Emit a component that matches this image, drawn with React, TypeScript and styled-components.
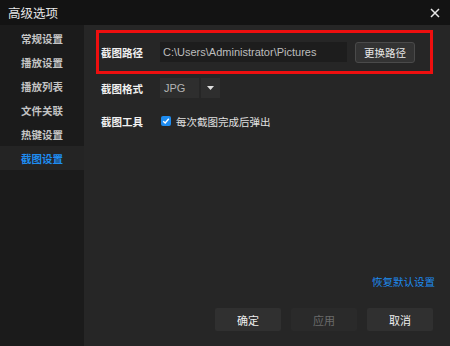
import styled, { createGlobalStyle } from "styled-components";

const Global = createGlobalStyle`
  html, body {
    margin: 0;
    padding: 0;
    background: #262626;
  }
  * {
    box-sizing: border-box;
  }
`;

const Window = styled.div`
  width: 450px;
  height: 346px;
  display: flex;
  flex-direction: column;
  background: #262626;
  font-family: "Liberation Sans", "Noto Sans CJK SC", sans-serif;
  font-size: 12px;
  color: #dcdcdc;
  overflow: hidden;
`;

const TitleBar = styled.div`
  height: 25px;
  flex: none;
  display: flex;
  align-items: center;
  justify-content: space-between;
  padding: 0 10px 0 8px;
  background: #131313;
  font-size: 12.5px;
  color: #e6e6e6;
`;

const Body = styled.div`
  flex: 1;
  display: flex;
`;

const Sidebar = styled.div`
  width: 84px;
  flex: none;
  background: #1b1b1b;
  padding-top: 1px;
  display: flex;
  flex-direction: column;
`;

const NavItem = styled.div<{ $active?: boolean }>`
  height: 24px;
  display: flex;
  align-items: center;
  justify-content: center;
  font-size: 10.5px;
  font-weight: 700;
  color: ${(p) => (p.$active ? "#1e8cf0" : "#c4c4c4")};
  background: ${(p) => (p.$active ? "#242424" : "transparent")};
`;

const Main = styled.div`
  flex: 1;
  display: flex;
  flex-direction: column;
  padding: 5px 14px 15px 12px;
`;

const Highlight = styled.div`
  border: 3px solid #ee0f0f;
  height: 44px;
  display: flex;
  align-items: center;
  padding-left: 2px;
  margin-right: 3px;
`;

const Row = styled.div<{ $h: number }>`
  height: ${(p) => p.$h}px;
  display: flex;
  align-items: center;
  padding-left: 5px;
`;

const Label = styled.div`
  width: 59px;
  flex: none;
  font-weight: 700;
  font-size: 10.5px;
  color: #f0f0f0;
`;

const PathBox = styled.div`
  width: 187px;
  height: 20px;
  background: #1d1d1d;
  display: flex;
  align-items: center;
  padding-left: 3px;
  font-size: 11px;
  color: #bdbdbd;
`;

const SmallButton = styled.div`
  margin-left: 8px;
  width: 60px;
  height: 21px;
  border: 1px solid #4a4a4a;
  border-radius: 3px;
  background: #333333;
  display: flex;
  align-items: center;
  justify-content: center;
  font-size: 10.5px;
  color: #e8e8e8;
`;

const Select = styled.div`
  display: flex;
  gap: 2px;
  height: 20px;
`;

const SelectValue = styled.div`
  width: 39px;
  background: #2e2e2e;
  display: flex;
  align-items: center;
  padding-left: 4px;
  font-size: 11px;
  color: #b4b4b4;
`;

const SelectArrow = styled.div`
  width: 19px;
  background: #2e2e2e;
  display: flex;
  align-items: center;
  justify-content: center;
`;

const Check = styled.div`
  width: 10px;
  height: 10px;
  border-radius: 2px;
  background: #1e8cf0;
  display: flex;
  align-items: center;
  justify-content: center;
  margin: 0 5px 0 1px;
`;

const CheckText = styled.div`
  font-size: 10.5px;
  color: #e0e0e0;
`;

const Spacer = styled.div`
  flex: 1;
`;

const ResetLink = styled.div`
  align-self: flex-end;
  font-size: 10.5px;
  color: #1e8cf0;
  margin-right: 1px;
`;

const Footer = styled.div`
  margin-top: 19px;
  margin-right: 3px;
  display: flex;
  justify-content: flex-end;
  gap: 10px;
`;

const FooterButton = styled.div<{ $disabled?: boolean }>`
  width: 66px;
  height: 23px;
  border-radius: 2px;
  background: ${(p) => (p.$disabled ? "#2a2a2a" : "#303030")};
  display: flex;
  align-items: center;
  justify-content: center;
  font-size: 11px;
  color: ${(p) => (p.$disabled ? "#6a6a6a" : "#eeeeee")};
`;

const navItems = ["常规设置", "播放设置", "播放列表", "文件关联", "热键设置", "截图设置"];

export default function App() {
  return (
    <Window>
      <Global />
      <TitleBar>
        <span>高级选项</span>
        <svg width="10" height="10" viewBox="0 0 10 10">
          <path d="M1 1L9 9M9 1L1 9" stroke="#e8e8e8" strokeWidth="1.5" />
        </svg>
      </TitleBar>
      <Body>
        <Sidebar>
          {navItems.map((n, i) => (
            <NavItem key={n} $active={i === navItems.length - 1}>
              {n}
            </NavItem>
          ))}
        </Sidebar>
        <Main>
          <Highlight>
            <Label>截图路径</Label>
            <PathBox>C:\Users\Administrator\Pictures</PathBox>
            <SmallButton>更换路径</SmallButton>
          </Highlight>
          <Row $h={28}>
            <Label>截图格式</Label>
            <Select>
              <SelectValue>JPG</SelectValue>
              <SelectArrow>
                <svg width="7" height="4" viewBox="0 0 7 4">
                  <path d="M0 0H7L3.5 4Z" fill="#e0e0e0" />
                </svg>
              </SelectArrow>
            </Select>
          </Row>
          <Row $h={38}>
            <Label>截图工具</Label>
            <Check>
              <svg width="8" height="8" viewBox="0 0 8 8">
                <path d="M1.2 4.2L3.2 6L6.8 1.8" stroke="#fff" strokeWidth="1.4" fill="none" />
              </svg>
            </Check>
            <CheckText>每次截图完成后弹出</CheckText>
          </Row>
          <Spacer />
          <ResetLink>恢复默认设置</ResetLink>
          <Footer>
            <FooterButton>确定</FooterButton>
            <FooterButton $disabled>应用</FooterButton>
            <FooterButton>取消</FooterButton>
          </Footer>
        </Main>
      </Body>
    </Window>
  );
}
